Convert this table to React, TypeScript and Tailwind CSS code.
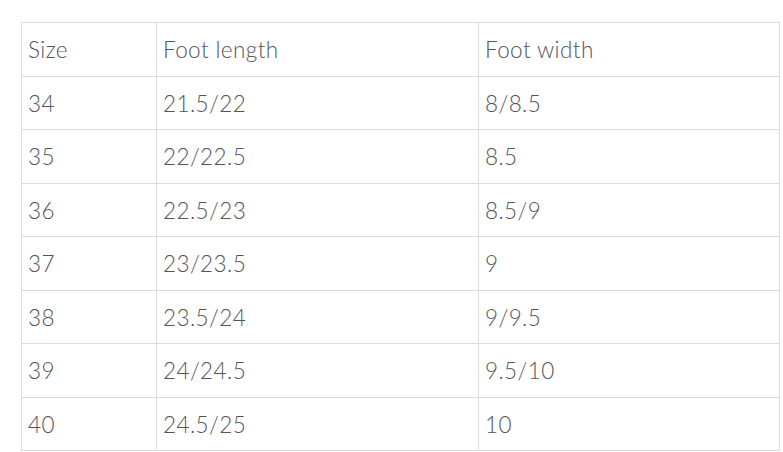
import React from "react";

const rows = [
  ["34", "21.5/22", "8/8.5"],
  ["35", "22/22.5", "8.5"],
  ["36", "22.5/23", "8.5/9"],
  ["37", "23/23.5", "9"],
  ["38", "23.5/24", "9/9.5"],
  ["39", "24/24.5", "9.5/10"],
  ["40", "24.5/25", "10"],
];

export default function App() {
  const cell = "border border-[#dddddd] h-[53.5px] px-[6px] pt-[2px] text-left align-middle font-light";
  return (
    <div className="w-[783px] h-[452px] bg-white pt-[22px] pl-[21px]" style={{ fontFamily: "Lato, 'Open Sans', sans-serif" }}>
      <table className="border-collapse w-[758px] text-[22.5px] tracking-[0.4px] text-[#555555] table-fixed">
        <colgroup>
          <col className="w-[135px]" />
          <col className="w-[322px]" />
          <col className="w-[301px]" />
        </colgroup>
        <thead>
          <tr>
            <th className={cell}>Size</th>
            <th className={cell}>Foot length</th>
            <th className={cell}>Foot width</th>
          </tr>
        </thead>
        <tbody>
          {rows.map((r) => (
            <tr key={r[0]}>
              {r.map((c, i) => (
                <td key={i} className={cell}>{c}</td>
              ))}
            </tr>
          ))}
        </tbody>
      </table>
    </div>
  );
}
